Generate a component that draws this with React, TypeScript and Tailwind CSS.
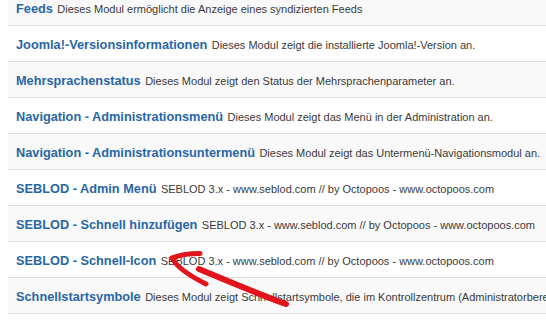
const seblod = "SEBLOD 3.x - www.seblod.com // by Octopoos - www.octopoos.com";

const modules = [
  { title: "Feeds", desc: "Dieses Modul ermöglicht die Anzeige eines syndizierten Feeds" },
  { title: "Joomla!-Versionsinformationen", desc: "Dieses Modul zeigt die installierte Joomla!-Version an." },
  { title: "Mehrsprachenstatus", desc: "Dieses Modul zeigt den Status der Mehrsprachenparameter an." },
  { title: "Navigation - Administrationsmenü", desc: "Dieses Modul zeigt das Menü in der Administration an." },
  { title: "Navigation - Administrationsuntermenü", desc: "Dieses Modul zeigt das Untermenü-Navigationsmodul an." },
  { title: "SEBLOD - Admin Menü", desc: seblod },
  { title: "SEBLOD - Schnell hinzufügen", desc: seblod },
  { title: "SEBLOD - Schnell-Icon", desc: seblod },
  {
    title: "Schnellstartsymbole",
    desc: "Dieses Modul zeigt Schnellstartsymbole, die im Kontrollzentrum (Administratorbereich) angezeigt werden.",
  },
  { title: "Statistiken", desc: "Dieses Modul zeigt Informationen über Ihre Serverinstallation." },
];

function ModuleRow({ title, desc, striped }: { title: string; desc: string; striped: boolean }) {
  return (
    <div
      className={`flex h-[36px] items-center border-t border-[#dddddd] px-2 whitespace-nowrap ${
        striped ? "bg-[#f9f9f9]" : "bg-white"
      }`}
    >
      <p className="leading-none">
        <a className="text-[12.75px] font-bold text-[#2866a6]">{title}</a>{" "}
        <span className="text-[11px] text-[#3a3a3a]">{desc}</span>
      </p>
    </div>
  );
}

export default function App() {
  return (
    <div className="relative h-[328px] w-[546px] overflow-hidden bg-white font-['Liberation_Sans',Arial,sans-serif]">
      <div className="-mt-[11px] w-[700px] pl-2">
        {modules.map((m, i) => (
          <ModuleRow key={m.title} title={m.title} desc={m.desc} striped={i % 2 === 0} />
        ))}
      </div>

      {/* hand-drawn red arrow */}
      <svg className="pointer-events-none absolute inset-0" width="546" height="328" viewBox="0 0 546 328" fill="none">
        <path
          d="M200 253.5 C190 253.5 179 255 172 258 C177 268 192 277 206 284"
          stroke="#e3131b"
          strokeWidth="5"
          strokeLinecap="round"
          strokeLinejoin="round"
        />
        <path d="M199 269 C228 281 258 294 286 304" stroke="#e3131b" strokeWidth="6" strokeLinecap="round" />
      </svg>
    </div>
  );
}
